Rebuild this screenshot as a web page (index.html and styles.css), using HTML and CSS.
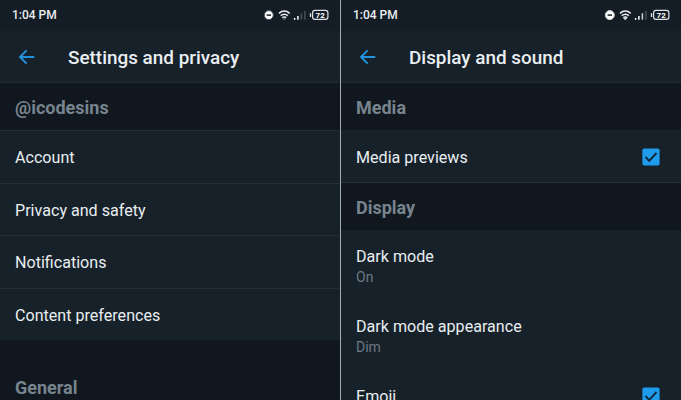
FILE: index.html
```
<!DOCTYPE html>
<html>
<head>
  <meta charset="utf-8">
  <title>Settings</title>
  <link rel="stylesheet" href="styles.css">
</head>
<body>
  <!-- shared icons -->
  <svg class="sprite">
    <symbol id="status" viewBox="0 0 68 14">
      <circle cx="5.8" cy="7.1" r="4.5" fill="#fff"/>
      <path d="M3.6 7.1h4.4" stroke="#16202a" stroke-width="1.5"/>
      <g fill="none" stroke="#eef1f3" stroke-width="1.5">
        <path d="M15.9 5.3Q21.3 .9 26.7 5.3"/>
        <path d="M17.7 7.7Q21.3 4.8 24.9 7.7"/>
        <path d="M19.3 9.7Q21.3 8.2 23.3 9.7"/>
      </g>
      <path d="M19.9 10.3h2.8l-1.4 1.6z" fill="#eef1f3"/>
      <path d="M31.6 10v1.7M34.9 8v3.7" stroke="#fff" stroke-width="1.5"/>
      <path d="M38.4 5.3v6.4" stroke-width="1.5"/>
      <path d="M41.9 3v8.7" stroke="#46515a" stroke-width="1.5"/>
      <path d="M47.5 5.2v3.8" stroke="#dfe3e6" stroke-width="1.4"/>
      <rect x="49.6" y="2.4" width="15.3" height="9" rx="2.4" fill="none" stroke="#dfe3e6" stroke-width="1.2"/>
      <text x="57.2" y="9.8" class="battery">72</text>
    </symbol>
    <symbol id="back" viewBox="0 0 18 16">
      <path d="M16.3 8H2M8.6 1.4L2 8l6.6 6.6" fill="none" stroke="#2392dd" stroke-width="1.9"/>
    </symbol>
    <symbol id="check" viewBox="0 0 18 18">
      <rect x=".4" y=".4" width="17.2" height="17.2" rx="1.8" fill="#1f9bee"/>
      <path d="M3.5 9l3.7 3.8 7.3-7.8" fill="none" stroke="#12283a" stroke-width="1.9"/>
    </symbol>
  </svg>

  <div class="screens">
    <div class="screen">
      <div class="status-bar">
        <span>1:04 PM</span>
        <svg class="status-icons"><use href="#status"/></svg>
      </div>
      <div class="header">
        <svg class="back"><use href="#back"/></svg>
        <h1>Settings and privacy</h1>
      </div>
      <h2 class="section">@icodesins</h2>
      <div class="list">
        <div class="row">Account</div>
        <div class="row">Privacy and safety</div>
        <div class="row">Notifications</div>
        <div class="row">Content preferences</div>
      </div>
      <h2 class="section general">General</h2>
    </div>

    <div class="screen display-screen">
      <div class="status-bar">
        <span>1:04 PM</span>
        <svg class="status-icons strong"><use href="#status"/></svg>
      </div>
      <div class="header">
        <svg class="back"><use href="#back"/></svg>
        <h1>Display and sound</h1>
      </div>
      <h2 class="section">Media</h2>
      <div class="row media-row">
        <span>Media previews</span>
        <svg class="check"><use href="#check"/></svg>
      </div>
      <h2 class="section">Display</h2>
      <div class="option">
        <div class="name">Dark mode</div>
        <div class="value">On</div>
      </div>
      <div class="option">
        <div class="name">Dark mode appearance</div>
        <div class="value">Dim</div>
      </div>
      <div class="option emoji">
        <div class="name">Emoji</div>
        <svg class="check"><use href="#check"/></svg>
      </div>
    </div>
  </div>
</body>
</html>
```

FILE: styles.css
```
* {
  box-sizing: border-box;
}

body {
  margin: 0;
  height: 400px;
  overflow: hidden;
  background-color: #10171e;
  color: #e9eef1;
  font-family: Roboto, sans-serif;
}

.sprite {
  display: none;
}

.screens {
  display: grid;
  grid-template-columns: 340px 341px;
  height: 400px;
  overflow: hidden;
}

.screen {
  height: 400px;
  overflow: hidden;
  background-color: #10171e;
}

.display-screen {
  border-left: 1px solid #a3abb1;
  background-color: #17212a;
}

.status-bar {
  display: flex;
  justify-content: space-between;
  height: 31px;
  padding: 8px 9px 0 12px;
  background-color: #141d26;
  font-size: 12px;
  font-weight: 500;
  line-height: 15px;
}

.status-icons {
  width: 68px;
  height: 14px;
  stroke: #46515a;
}

.status-icons.strong {
  stroke: #cdd3d7;
}

.battery {
  fill: #fff;
  stroke: none;
  font-size: 8px;
  font-weight: 700;
  text-anchor: middle;
}

.header {
  display: flex;
  align-items: center;
  height: 52px;
  padding: 0 18px;
  border-bottom: 1px solid #222b33;
  background-color: #17212a;
}

.back {
  width: 18px;
  height: 16px;
}

h1 {
  margin: 2px 0 0 32px;
  font-size: 18.9px;
  font-weight: 500;
  line-height: 24px;
}

.section {
  height: 47px;
  margin: 0;
  padding: 2px 15px 0;
  background-color: #10171e;
  color: #77848e;
  font-size: 18px;
  font-weight: 700;
  line-height: 46px;
}

.row {
  display: flex;
  align-items: center;
  justify-content: space-between;
  height: 52.5px;
  padding: 2px 15px 0;
  border-top: 1px solid #242e37;
  background-color: #17212a;
  font-size: 16.1px;
}

.general {
  height: 60px;
  padding-top: 25px;
}

.media-row {
  height: 53px;
  padding-right: 21px;
  border-top: 0;
  border-bottom: 1px solid #242e37;
}

.check {
  width: 18px;
  height: 18px;
}

.option {
  height: 70px;
  padding: 17px 15px 0;
}

.name {
  font-size: 16.1px;
  line-height: 20px;
}

.value {
  color: #6c7883;
  font-size: 14px;
  line-height: 20px;
}

.emoji {
  display: flex;
  justify-content: space-between;
  padding-right: 21px;
}
```
